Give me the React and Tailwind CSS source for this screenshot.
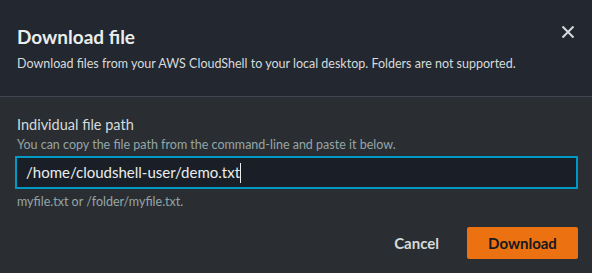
import React from "react";

export default function App() {
  return (
    <div className="w-[592px] h-[273px] bg-[#2a2e33] overflow-hidden" style={{ fontFamily: 'Lato, "Noto Sans", sans-serif' }}>
      <div className="h-[97px] bg-[#232730] border-b border-[#414750] pl-[17px] pr-[14px] pt-[25px] relative">
        <div className="text-[19px] leading-[24px] font-bold text-[#eaeded]">Download file</div>
        <div className="mt-[6px] text-[12.5px] leading-[18px] text-[#d5dbdb]">
          Download files from your AWS CloudShell to your local desktop. Folders are not supported.
        </div>
        <button className="absolute right-[17px] top-[25px] w-[14px] h-[14px] flex items-center justify-center">
          <svg width="14" height="14" viewBox="0 0 14 14">
            <path d="M1.5 1.5 L12.5 12.5 M12.5 1.5 L1.5 12.5" stroke="#d5dbdb" strokeWidth="2" />
          </svg>
        </button>
      </div>
      <div className="px-[15px] pt-[18px]">
        <div className="pl-[2px] text-[14.5px] leading-[20px] text-[#d5dbdb]">Individual file path</div>
        <div className="pl-[2px] text-[12.5px] leading-[16px] text-[#95a5a6] mt-[2px]">
          You can copy the file path from the command-line and paste it below.
        </div>
        <div className="mt-[3px] h-[33px] w-[563px] border-2 border-[#0099c4] bg-[#1a1f27] flex items-center pl-[9px]">
          <span className="text-[15px] text-[#eaeded]">/home/cloudshell-user/demo.txt</span>
          <span className="w-px h-[20px] bg-[#eaeded]" />
        </div>
        <div className="pl-[2px] mt-[5px] text-[12.5px] leading-[16px] text-[#95a5a6]">myfile.txt or /folder/myfile.txt.</div>
        <div className="flex justify-end items-center mt-[17px] gap-[28px] w-[563px]">
          <button className="text-[15px] font-bold text-[#d5dbdb]">Cancel</button>
          <button className="w-[111px] h-[32px] bg-[#ec7211] rounded-[2px] text-[15px] font-bold text-[#16191f]">Download</button>
        </div>
      </div>
    </div>
  );
}
